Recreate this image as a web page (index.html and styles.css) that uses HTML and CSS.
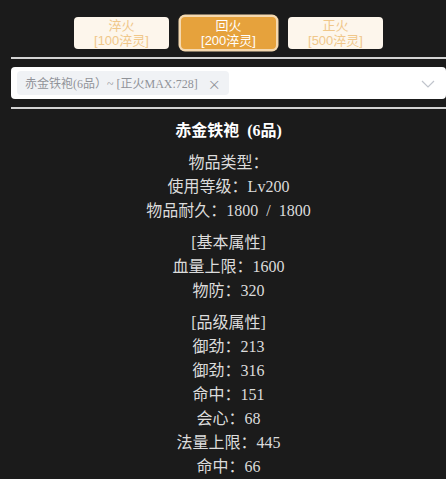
FILE: index.html
```html
<!DOCTYPE html>
<html lang="zh">
<head>
<meta charset="utf-8">
<link rel="stylesheet" href="styles.css">
</head>
<body>
<div class="page">
  <div class="btn-row">
    <div class="btn"><span class="btn-line">淬火</span><span class="btn-line">[100淬灵]</span></div>
    <div class="btn active"><span class="btn-line">回火</span><span class="btn-line">[200淬灵]</span></div>
    <div class="btn"><span class="btn-line">正火</span><span class="btn-line">[500淬灵]</span></div>
  </div>
  <div class="rule"></div>
  <div class="select">
    <span class="tag">赤金铁袍(6品）~ [正火MAX:728]<span class="tag-close">×</span></span>
    <svg class="chevron" width="14" height="8" viewBox="0 0 14 8"><path d="M1 1 L7 7 L13 1" fill="none" stroke="#c0c4cc" stroke-width="1.2"/></svg>
  </div>
  <div class="rule"></div>
  <div class="info">
    <div class="title">赤金铁袍 (6品)</div>
    <div class="group">
      <div>物品类型：</div>
      <div>使用等级：Lv200</div>
      <div>物品耐久：1800 / 1800</div>
    </div>
    <div class="group">
      <div>[基本属性]</div>
      <div>血量上限：1600</div>
      <div>物防：320</div>
    </div>
    <div class="group">
      <div>[品级属性]</div>
      <div>御劲：213</div>
      <div>御劲：316</div>
      <div>命中：151</div>
      <div>会心：68</div>
      <div>法量上限：445</div>
      <div>命中：66</div>
    </div>
  </div>
</div>
</body>
</html>
```
FILE: styles.css
```css
html, body {
  margin: 0;
  padding: 0;
  background: #1b1b1b;
  overflow: hidden;
}
.page {
  padding-left: 11px;
  padding-top: 17px;
}
.btn-row {
  display: flex;
  justify-content: center;
  gap: 12px;
}
.btn {
  width: 95px;
  height: 32px;
  box-sizing: border-box;
  border-radius: 4px;
  background: #fdf6ec;
  color: #f0c78a;
  font-family: "Liberation Sans", "Noto Sans CJK SC", sans-serif;
  font-size: 13px;
  line-height: 15px;
  text-align: center;
  padding-top: 1px;
  display: flex;
  flex-direction: column;
  align-items: center;
}
.btn-line {
  display: block;
  height: 15px;
}
.btn.active {
  background: #e6a23c;
  color: #ffffff;
  box-shadow: 0 0 0 2.5px #f5d9b0;
}
.rule {
  height: 2px;
  background: #d4d4d4;
  margin-top: 8px;
}
.select {
  margin-top: 8px;
  height: 32px;
  background: #ffffff;
  border-radius: 4px;
  display: flex;
  align-items: center;
  padding-left: 6px;
  position: relative;
}
.tag {
  display: flex;
  align-items: center;
  height: 24px;
  background: #f0f2f5;
  border-radius: 4px;
  padding: 0 8px;
  color: #909399;
  font-family: "Liberation Serif", "Noto Sans CJK SC", serif;
  font-size: 12px;
  white-space: pre;
}
.tag-close {
  margin-left: 10px;
  font-family: "Noto Sans CJK SC", sans-serif;
  font-size: 13px;
}
.chevron {
  position: absolute;
  right: 11px;
  top: 13px;
}
.info {
  padding-top: 10px;
  text-align: center;
  font-family: "Liberation Serif", "Noto Sans CJK SC", serif;
  font-size: 16px;
  line-height: 24px;
  color: #dcdcdc;
  word-spacing: 4px;
}
.title {
  color: #ffffff;
  font-weight: bold;
  margin-bottom: 8px;
}
.group {
  margin-bottom: 8px;
}
```
